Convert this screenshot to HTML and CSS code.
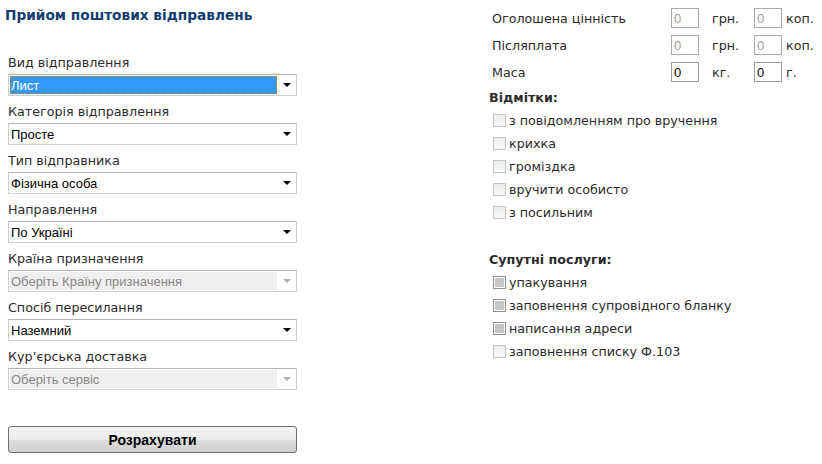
FILE: index.html
```html
<!DOCTYPE html>
<html lang="uk">
<head>
<meta charset="utf-8">
<title>Прийом поштових відправлень</title>
<link rel="stylesheet" href="styles.css">
</head>
<body>
<div class="page">
  <div class="left">
    <h1 class="title">Прийом поштових відправлень</h1>
    <div class="field">
      <div class="flabel">Вид відправлення</div>
      <div class="select"><span class="val focus"><span>Лист</span></span><span class="arrow"></span></div>
    </div>
    <div class="field">
      <div class="flabel">Категорія відправлення</div>
      <div class="select"><span class="val">Просте</span><span class="arrow"></span></div>
    </div>
    <div class="field">
      <div class="flabel">Тип відправника</div>
      <div class="select"><span class="val">Фізична особа</span><span class="arrow"></span></div>
    </div>
    <div class="field">
      <div class="flabel">Направлення</div>
      <div class="select"><span class="val">По Україні</span><span class="arrow"></span></div>
    </div>
    <div class="field">
      <div class="flabel">Країна призначення</div>
      <div class="select disabled"><span class="val">Оберіть Країну призначення</span><span class="arrow"></span></div>
    </div>
    <div class="field">
      <div class="flabel">Спосіб пересилання</div>
      <div class="select"><span class="val">Наземний</span><span class="arrow"></span></div>
    </div>
    <div class="field">
      <div class="flabel">Кур’єрська доставка</div>
      <div class="select disabled"><span class="val">Оберіть сервіс</span><span class="arrow"></span></div>
    </div>
    <button class="calc" type="button">Розрахувати</button>
  </div>

  <div class="right">
    <div class="vrow">
      <span class="vlabel">Оголошена цінність</span>
      <input class="inp" type="text" value="0" disabled>
      <span class="unit u1">грн.</span>
      <input class="inp" type="text" value="0" disabled>
      <span class="unit u2">коп.</span>
    </div>
    <div class="vrow">
      <span class="vlabel">Післяплата</span>
      <input class="inp" type="text" value="0" disabled>
      <span class="unit u1">грн.</span>
      <input class="inp" type="text" value="0" disabled>
      <span class="unit u2">коп.</span>
    </div>
    <div class="vrow">
      <span class="vlabel">Маса</span>
      <input class="inp active" type="text" value="0">
      <span class="unit u1">кг.</span>
      <input class="inp active" type="text" value="0">
      <span class="unit u2">г.</span>
    </div>

    <div class="heading h1st">Відмітки:</div>
    <div class="cbrow"><span class="cb"></span><span>з повідомленням про вручення</span></div>
    <div class="cbrow"><span class="cb"></span><span>крихка</span></div>
    <div class="cbrow"><span class="cb"></span><span>громіздка</span></div>
    <div class="cbrow"><span class="cb"></span><span>вручити особисто</span></div>
    <div class="cbrow"><span class="cb"></span><span>з посильним</span></div>

    <div class="heading h2nd">Супутні послуги:</div>
    <div class="cbrow"><span class="cb grey"></span><span>упакування</span></div>
    <div class="cbrow"><span class="cb grey"></span><span>заповнення супровідного бланку</span></div>
    <div class="cbrow"><span class="cb grey"></span><span>написання адреси</span></div>
    <div class="cbrow"><span class="cb"></span><span>заповнення списку Ф.103</span></div>
  </div>
</div>
</body>
</html>
```

FILE: styles.css
```css
* { box-sizing: border-box; }

html, body {
  margin: 0;
  padding: 0;
  background: #ffffff;
}

body {
  font-family: "DejaVu Sans", Verdana, sans-serif;
  font-size: 12.7px;
  color: #2b2b2b;
}

.page {
  display: flex;
  align-items: flex-start;
  padding-left: 8px;
}

.left {
  width: 289px;
  display: flex;
  flex-direction: column;
}

.title {
  margin: 6px 0 23px -3px;
  font-size: 13.7px;
  line-height: 18px;
  font-weight: bold;
  color: #123d70;
  white-space: nowrap;
}

.field {
  margin-top: 8px;
}

.flabel {
  line-height: 16px;
  margin-bottom: 3px;
  white-space: nowrap;
}

.select {
  height: 22px;
  display: flex;
  align-items: stretch;
  border: 1px solid #cfcfcf;
  border-top-color: #b4b4b4;
  background: #ffffff;
  padding: 1px;
  font-family: "Liberation Sans", Arial, sans-serif;
  font-size: 13px;
  color: #000000;
}

.val {
  flex: 1;
  display: flex;
  align-items: center;
  padding-left: 1px;
  white-space: nowrap;
  overflow: hidden;
}

.val.focus {
  background: #3399ff;
  color: #ffffff;
  outline: 1px dotted #d87a1a;
  outline-offset: -1px;
}

.arrow {
  width: 18px;
  display: flex;
  align-items: center;
  justify-content: center;
}

.arrow::before {
  content: "";
  width: 0;
  height: 0;
  border-left: 4px solid transparent;
  border-right: 4px solid transparent;
  border-top: 4px solid #000000;
  margin-left: 1px;
}

.select.disabled .val {
  background: #efefef;
  color: #888888;
}

.select.disabled .arrow::before {
  border-top-color: #b0b0b0;
}

.calc {
  margin-top: 36px;
  height: 27px;
  width: 289px;
  border: 1px solid #707070;
  border-radius: 3px;
  background: linear-gradient(#f3f3f3 0%, #ebebeb 50%, #dddddd 51%, #d0d0d0 100%);
  font-family: "Liberation Sans", Arial, sans-serif;
  font-size: 14px;
  font-weight: bold;
  color: #000000;
  padding: 0;
}

.right {
  margin-left: 192px;
  padding-top: 8px;
  display: flex;
  flex-direction: column;
}

.vrow {
  display: flex;
  align-items: center;
  height: 20px;
  margin-bottom: 7px;
}

.vlabel {
  width: 182px;
  padding-left: 3px;
  white-space: nowrap;
}

.inp {
  width: 28px;
  height: 20px;
  margin: 0;
  padding: 0 0 0 2px;
  border: 1px solid #a9a9a9;
  background: #ffffff;
  font-family: "Liberation Sans", Arial, sans-serif;
  font-size: 13px;
  color: #a0a0a0;
}

.inp.active {
  color: #000000;
  border-color: #9a9a9a;
}

.unit {
  white-space: nowrap;
}

.unit.u1 {
  width: 55px;
  padding-left: 13px;
}

.unit.u2 {
  padding-left: 4px;
}

.heading {
  font-weight: bold;
  line-height: 18px;
  white-space: nowrap;
}

.heading.h1st {
  margin-top: 0;
  margin-bottom: 2px;
}

.heading.h2nd {
  margin-top: 27px;
  margin-bottom: 2px;
}

.cbrow {
  height: 23px;
  display: flex;
  align-items: center;
  padding-left: 4px;
  white-space: nowrap;
}

.cb {
  width: 13px;
  height: 13px;
  margin-right: 3px;
  border: 1px solid #c4c4c4;
  background: linear-gradient(#ececec, #f8f8f8);
  flex: none;
}

.cb.grey {
  border-color: #8f8f8f;
  background: #c6c6c6;
  box-shadow: inset 0 0 0 1px #ffffff;
}
```
